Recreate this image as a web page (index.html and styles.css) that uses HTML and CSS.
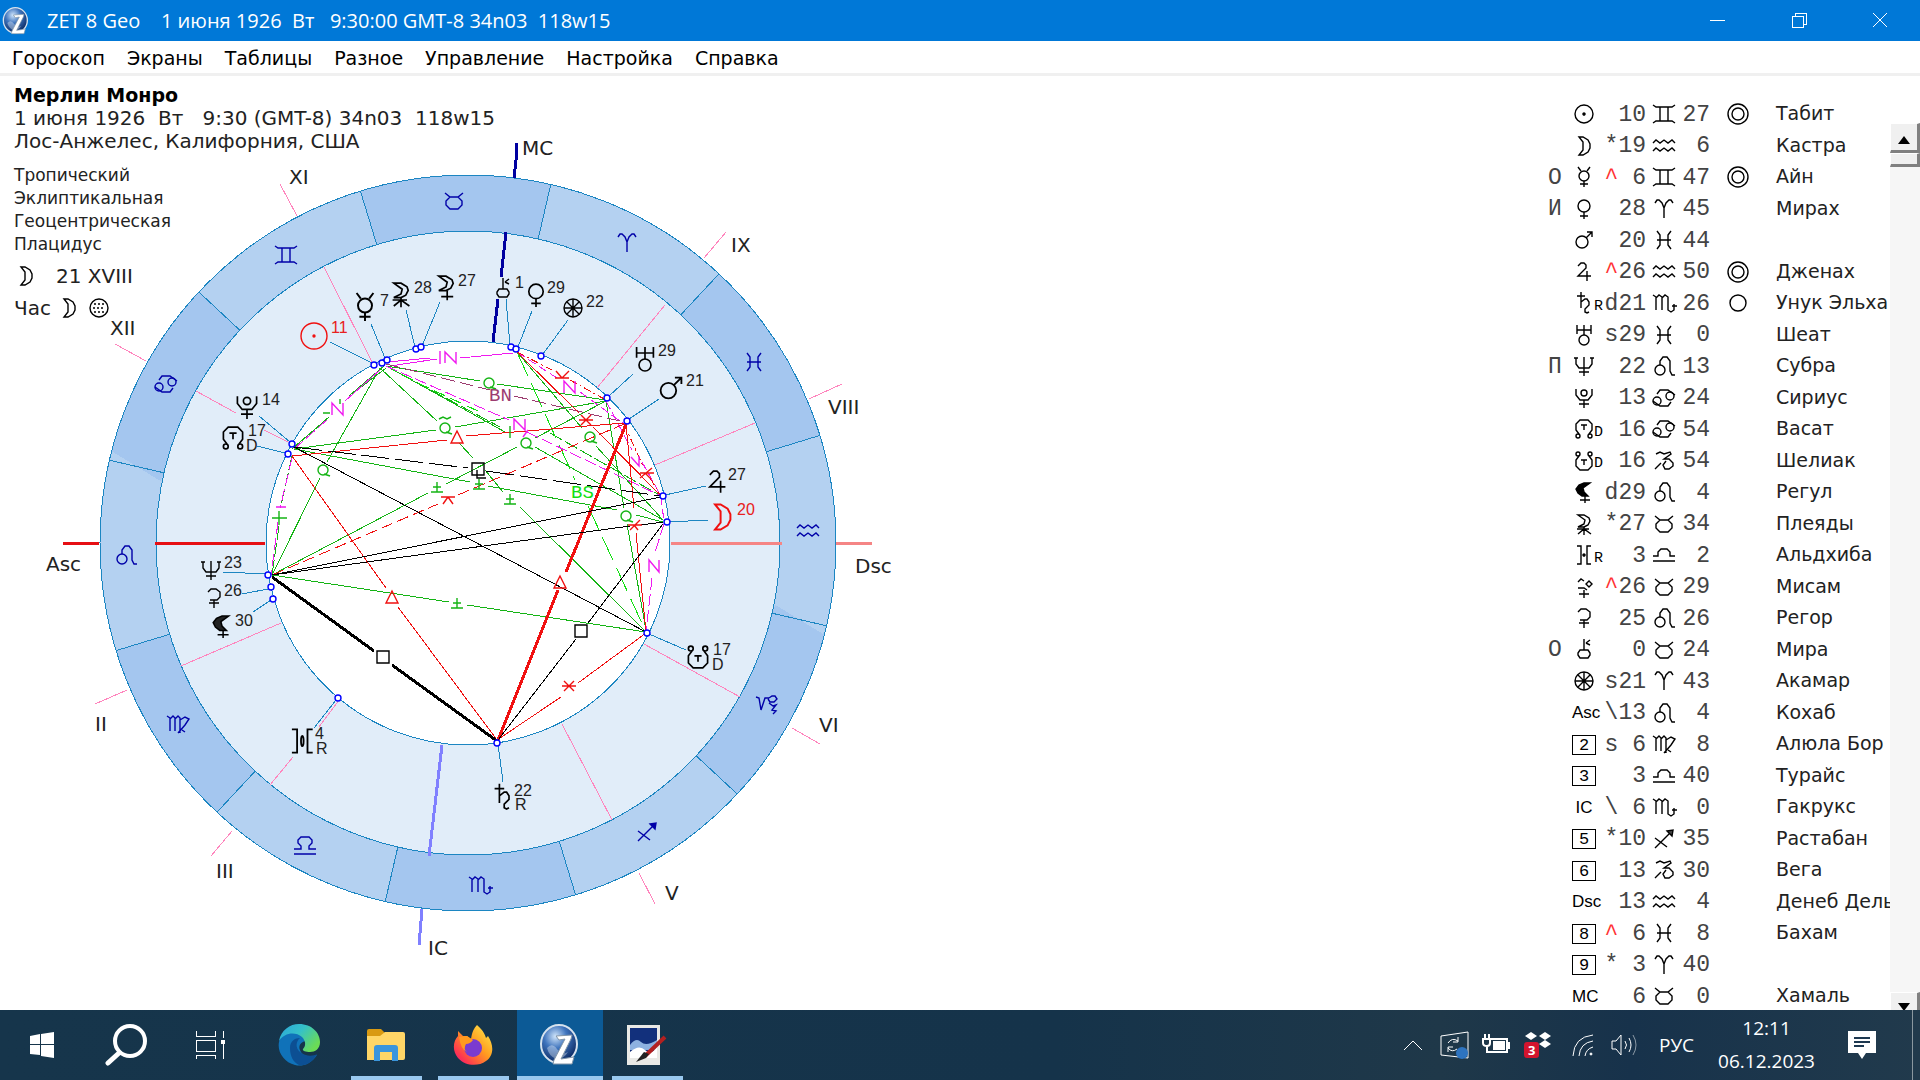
FILE: index.html
```html
<!DOCTYPE html>
<html lang="ru">
<head>
  <meta charset="UTF-8">
  <title>ZET 8 Geo</title>
  <link rel="stylesheet" href="styles.css">
</head>
<body>

  <!-- glyphs, all drawn around 0,0 -->
  <svg class="defs" width="0" height="0" aria-hidden="true">
    <defs>
      <radialGradient id="globe" cx="40%" cy="30%" r="70%"><stop offset="0" stop-color="#cfe4fa"/><stop offset=".45" stop-color="#3f74bd"/><stop offset="1" stop-color="#0c2a63"/></radialGradient>
      <linearGradient id="edgeTop" x1="0" y1="0" x2="1" y2=".6"><stop offset="0" stop-color="#2ba5dc"/><stop offset=".5" stop-color="#35c1c8"/><stop offset="1" stop-color="#6bdc55"/></linearGradient>
      <linearGradient id="fire" x1="1" y1="0" x2="0" y2="1"><stop offset="0" stop-color="#fff44f"/><stop offset=".45" stop-color="#ff9a1f"/><stop offset=".8" stop-color="#ff3650"/><stop offset="1" stop-color="#e0128b"/></linearGradient>

      <g id="sun"><circle r="9"/><circle class="solid" r="1"/></g>
      <g id="moon"><path d="M-5-9H-1L4-6L6-2V2L4 6L-1 9H-5L-1 4V-4Z"/></g>
      <g id="mer"><circle cy="-1" r="5"/><path d="M-6-10L-3-6M6-10L3-6M0 4V10M-4 7H4"/></g>
      <g id="ven"><circle cy="-3" r="6"/><path d="M0 3V10M-4 7H4"/></g>
      <g id="mar"><circle cx="-2" cy="2" r="6"/><path d="M2-2L8-8M3-8H8V-3"/></g>
      <g id="jup"><path d="M-6-6L-3-9H0L2-7V-4L-6 4H7M3-1V9"/></g>
      <g id="sat"><path d="M-3-11V5M-7-7H1M-3-1L1-4H3L5-1V2L1 6V9L3 10L5 9"/></g>
      <g id="ura"><path d="M-7-10V-1M7-10V-1M-7-5H7M0-10V0"/><circle cy="5" r="5"/></g>
      <g id="nep"><path d="M-8-8V-2L-5 2H5L8-2V-8M0-9V10M-5 6H5M-10-8H-6M6-8H10"/></g>
      <g id="plu"><circle cy="-5" r="3"/><path d="M-8-9V-3L-4 2H4L8-3V-9M0 2V10M-5 6H5"/></g>
      <g id="nn"><path d="M-5 5L-8 1V-5L-4-9H4L8-5V1L5 5M-3-4H3M0-4V1"/><circle cx="-6" cy="7" r="2"/><circle cx="6" cy="7" r="2"/></g>
      <g id="sn"><path d="M-5-5L-8-1V5L-4 9H4L8 5V-1L5-5M-3-1H3M0-1V4"/><circle cx="-6" cy="-7" r="2"/><circle cx="6" cy="-7" r="2"/></g>
      <g id="lil"><path class="solid" d="M6-9H0L-5-7L-8-3L-6 1L-2 4H4L0 0L-1-4Z"/><path d="M1 4V11M-4 8H6"/></g>
      <g id="whi"><path d="M-6-9H0L5-6L6-3L4 1L0 3H-6L0 0L1-4Z"/><path d="M0 3V11M-7 5H5M-6 10L0 5L7 10"/></g>
      <g id="whm"><path d="M-6-9H0L5-6L6-3L4 1L0 3H-6L0 0L1-4Z"/><path d="M1 3V11M-4 8H6"/></g>
      <g id="pro"><path d="M-7-9H-3V9H-7M9-9H5V9H9"/><ellipse cx="1" rx="1" ry="4"/></g>
      <g id="pro2"><path d="M-7-9H-3V9H-7M7-9H3V9H7"/><circle class="solid" r="1"/></g>
      <g id="dia"><path d="M-6-5L-3-8L0-6M-6 1H0L3 3M2-3L5-6L8-3L5 0ZM0 3V11M-5 7H5"/></g>
      <g id="cer"><path d="M-6-6L-3-9H2L6-6V-1L3 2H-4M0 2V10M-5 5H5"/></g>
      <g id="chi"><path d="M0-11V0M2-7L6-10M2-7L6-5M-4 0H4L6 3V5L4 8H-4L-6 5V3Z"/></g>
      <g id="for"><circle r="9"/><path d="M-9 0H9M0-9V9M-6-6L6 6M-6 6L6-6"/></g>

      <g id="ari"><path d="M-9-6L-7-9H-5L-2-6L0-1V9M9-6L7-9H5L2-6L0-1"/></g>
      <g id="tau"><path d="M-9-8L-4-4H4L9-8M-4-4L-8 0V4L-4 8H4L8 4V0L4-4"/></g>
      <g id="gem"><path d="M-11-9L-8-7H8L11-9M-11 9L-8 7H8L11 9M-4-7V7M4-7V7"/></g>
      <g id="can"><path d="M-7-4L-4-8H4L11-3M-11 3L-4 8H4L7 4"/><circle cx="6" cy="-2" r="4"/><circle cx="-7" cy="3" r="4"/></g>
      <g id="leo"><circle cx="-4" cy="4" r="5"/><path d="M-4-1L-4-5L-1-9H3L6-5V5L8 9H11"/></g>
      <g id="vir"><path d="M-11-8L-8-6V7M-8-5L-5-8L-3-6V7M-3-5L0-8L2-6V9M2-4L7-7L11-5L7 1L0 9M4 6L7 8"/></g>
      <g id="lib"><path d="M-11 4H-4V1L-7-2V-5L-4-8H4L7-5V-2L4 1V4H11M-11 9H11"/></g>
      <g id="lib2"><path d="M-11 1H-6V-3L-3-6H3L6-3V1H11M-11 6H11"/></g>
      <g id="sco"><path d="M-11-8L-8-6V7M-8-5L-5-8L-2-6V7M-2-5L1-8L4-6V7L7 9L10 7V1M8 3H13"/></g>
      <g id="sag"><path d="M-9 9L7-7M-9-1L3 8"/><path class="solid" d="M3-8L9-9L8-3Z"/></g>
      <g id="cap"><path d="M-11-8L-8-7L-6 5L-2-7H2M2-7L5-9H8L10-6L7-3H3L1-6M2-2L6 1L9 0L5 5L9 6L6 9"/></g>
      <g id="cap2"><path d="M-8-7L-4-9L0-7L6-9L7-7L0-2H5L9 2V5L5 8H1L-1 4L2 0M-9 8L-3 2"/></g>
      <g id="aqu"><path d="M-11-3L-8-6L-4-3L0-6L4-3L8-6L11-3M-11 5L-8 2L-4 5L0 2L4 5L8 2L11 5"/></g>
      <g id="pis"><path d="M-7-9L-4-5V5L-7 9M7-9L4-5V5L7 9M-7 0H7"/></g>

      <g id="ring2"><circle r="10"/><circle r="6"/></g>
      <g id="ring1"><circle r="8"/></g>

      <!-- aspect marks -->
      <g id="sq"><path d="M-6-6H6V6H-6Z"/></g>
      <g id="tri"><path d="M0-7L6 5H-6Z"/></g>
      <g id="sext"><path d="M-7 0H7M-5-5L5 5M-5 5L5-5"/></g>
      <g id="quin"><path d="M-6 5H6M0 5V-5M-4 0H4"/></g>
      <g id="inc"><path d="M-7-3H7M0-3L-5 4M0-3L5 4"/></g>
      <g id="q"><circle r="5"/><path d="M1 4L7 6"/></g>
      <g id="node"><circle r="3"/></g>
      <g id="zlogo"><ellipse cx="20" cy="20" rx="18" ry="19" fill="url(#globe)" stroke="#d6e2ee" stroke-width="2"/><path d="M8 24Q13 18 18 25T29 28Q24 36 17 35Q10 32 8 24Z" fill="#fff" opacity=".35"/><path d="M17 12L33 11L32 15L22 35L35 33L33 40H14L15 36L26 15L20 16Z" fill="#fff" stroke="#8195a8" stroke-width="1"/></g>
    </defs>
  </svg>

  <header class="titlebar">
    <svg class="app-icon" viewBox="0 0 42 42"><use href="#zlogo"/></svg>
    <h1>ZET 8 Geo    1 июня 1926  Вт   9:30:00 GMT-8 34n03  118w15</h1>
    <button class="win" aria-label="Свернуть"><svg width="16" height="16"><path d="M0 8H15"/></svg></button>
    <button class="win" aria-label="Восстановить"><svg width="16" height="16"><path d="M1 4H12V15H1ZM4 4V1H15V12H12"/></svg></button>
    <button class="win" aria-label="Закрыть"><svg class="smooth" width="16" height="16"><path d="M1 1L15 15M15 1L1 15"/></svg></button>
  </header>

  <nav class="menu">
    <button>Гороскоп</button>
    <button>Экраны</button>
    <button>Таблицы</button>
    <button>Разное</button>
    <button>Управление</button>
    <button>Настройка</button>
    <button>Справка</button>
  </nav>

  <main>
    <section class="chart">
      <div class="info">
        <h2>Мерлин Монро</h2>
        <p class="when">1 июня 1926  Вт   9:30 (GMT-8) 34n03  118w15</p>
        <p>Лос-Анжелес, Калифорния, США</p>
        <ul>
          <li>Тропический</li>
          <li>Эклиптикальная</li>
          <li>Геоцентрическая</li>
          <li>Плацидус</li>
        </ul>
        <p class="line"><svg class="g" viewBox="-12 -12 24 24"><use href="#moon"/></svg><span class="lunar">21 XVIII</span></p>
        <p class="line">Час <svg class="g" viewBox="-12 -12 24 24"><use href="#moon"/></svg><svg class="g" viewBox="-12 -12 24 24"><circle r="9"/><path stroke-dasharray="2 2" d="M-5-4H6M-6 0H6M-5 4H6"/></svg></p>
      </div>

      <svg class="wheel" viewBox="0 76 1000 934" preserveAspectRatio="xMinYMin meet">
        <!-- rings -->
        <g transform="translate(468 543)">
          <circle class="zodiac-light" r="340"/>
          <circle class="zodiac-dark" r="340" pathLength="360" transform="rotate(13)"/>
          <circle class="houses" r="312"/>
          <circle class="core" r="202"/>
          <circle class="rim" r="368"/>
          <g class="rim">
            <path id="cut" d="M-368 0H-312" transform="rotate(13)"/>
            <use href="#cut" transform="rotate(30)"/>
            <use href="#cut" transform="rotate(60)"/>
            <use href="#cut" transform="rotate(90)"/>
            <use href="#cut" transform="rotate(120)"/>
            <use href="#cut" transform="rotate(150)"/>
            <use href="#cut" transform="rotate(180)"/>
            <use href="#cut" transform="rotate(210)"/>
            <use href="#cut" transform="rotate(240)"/>
            <use href="#cut" transform="rotate(270)"/>
            <use href="#cut" transform="rotate(300)"/>
            <use href="#cut" transform="rotate(330)"/>
          </g>
        </g>

        <!-- house cusps -->
        <path class="cusp" d="M280 184L297 216M324 267L372 362M115 344L146 361M196 391L236 413M264 430L288 442M726 232L704 258M665 305L597 388M842 384L809 399M755 423L655 465M95 704L127 690M181 666L281 623M211 856L232 831M270 785L293 757M319 727L339 700M639 873L655 904M562 724L612 820M792 728L820 744M644 644L740 697"/>
        <path class="axis mc" d="M516 143V160L514 178M506 232L501 277M498 299L493 342"/>
        <path class="axis ic" d="M442 745L429 856M422 909L419 945"/>
        <path class="axis asc" d="M63 543H99M155 543H265"/>
        <path class="axis dsc" d="M671 543H782M836 543H872"/>

        <!-- aspects -->
        <g class="green">
          <path d="M386 366L480 381M497 384L606 400M380 368L437 421M459 443L473 458M485 470L503 492M520 507L646 632M380 368L327 462M320 478L272 575M384 366L349 396M329 417L292 449M386 368L352 394M326 420L294 447M294 449L436 430M455 427L606 401M294 449L470 482M488 486L617 510M636 515L663 522M272 575L428 493M446 484L517 447M535 438L606 401M272 575L449 602M467 605L646 632M517 352L582 428M596 446L663 520M606 401L624 508M627 524L646 630M535 447L663 520M390 368L505 432"/>
          <path stroke-dasharray="14 3" d="M292 456L281 505M279 526L272 575M386 366L500 427M550 433L661 496"/>
        </g>
        <g class="lime">
          <path stroke-dasharray="26 8" d="M517 352L575 480M588 506L646 632"/>
          <path stroke-dasharray="12 6" d="M386 366L420 384L480 412"/>
        </g>
        <g class="magenta">
          <path d="M388 362L430 358M390 366L437 359M460 358L513 353M345 401L380 370"/>
          <path stroke-dasharray="12 4" d="M386 366L509 420M527 432L661 496M294 449L328 419M292 458L280 508M278 522L271 575M664 524L655 552M652 578L646 632"/>
          <path stroke-dasharray="9 4" d="M517 352L560 380M580 392L624 424M606 401L632 450M642 462L661 496L664 522"/>
        </g>
        <g class="mauve"><path stroke-dasharray="14 5" d="M386 364L490 390M514 396L624 422"/></g>
        <g class="red">
          <path d="M292 456L447 440M466 436L624 423M292 456L386 588M398 607L497 740M517 352L579 413M593 427L661 496M497 740L561 697M578 683L646 633M626 424L634 508M636 533L646 632"/>
          <path stroke-dasharray="12 5" d="M272 575L438 504M458 495L624 424"/>
          <path stroke-dasharray="8 3 2 3" d="M517 352L552 370M570 380L606 400M624 424L643 466M650 478L661 496"/>
          <path class="bold" d="M626 424L566 572M558 590L498 740"/>
        </g>
        <g class="black">
          <path d="M294 447L646 632M272 575L661 497M272 575L630 526M641 525L663 522M663 524L588 623M576 639L498 740"/>
          <path stroke-dasharray="28 6" d="M294 447L468 468M486 471L661 496"/>
          <path class="bold" d="M272 577L374 651M392 665L497 741"/>
        </g>

        <g class="green marks">
          <use href="#q" x="489" y="383"/><use href="#q" x="445" y="428"/><path d="M439 419L443 417L447 419L451 417"/>
          <use href="#q" x="323" y="470"/><use href="#q" x="526" y="443"/><use href="#q" x="590" y="437"/><use href="#q" x="626" y="516"/>
          <use href="#quin" x="437" y="487"/><use href="#quin" x="479" y="484"/><use href="#quin" x="510" y="499"/><use href="#quin" x="457" y="603"/>
          <path d="M272 518H287M279 511V525M510 426V438M323 413H330M340 399V404"/>
        </g>
        <g class="red marks">
          <use href="#tri" x="457" y="438"/><use href="#tri" x="392" y="598"/><use href="#tri" x="560" y="583"/>
          <use href="#sext" x="569" y="686"/><use href="#sext" x="586" y="420"/>
          <use href="#inc" x="448" y="500"/><path d="M555 378H569M562 378L556 371M562 378L569 371"/>
          <path d="M640 473H654M640 478L652 468M645 473L651 479M628 525H642M630 530L640 520M634 525L638 530"/>
        </g>
        <g class="black marks"><use href="#sq" x="478" y="469"/><path d="M477 470V478H486"/><use href="#sq" x="383" y="657"/><use href="#sq" x="581" y="631"/></g>
        <g class="magenta marks">
          <path d="M440 351V364M445 363V352L456 363V352M332 415V403L343 415V403M514 430V419L525 430V419M528 430L523 437M564 393V381L575 393V381M649 572V560L659 572V560M631 457L639 466V456M276 507H286"/>
        </g>
        <text class="mauve-text" x="489" y="401">BN</text>
        <text class="lime-text" x="571" y="498">BS</text>

        <!-- leaders from the planets to the inner circle -->
        <path class="leader" d="M330 342L372 363M371 324L385 358M406 310L415 347M440 302L422 346M506 299L510 345M532 311L518 347M568 320L543 354M633 374L609 396M659 399L629 419M706 486L665 495M708 520L668 522M259 416L290 442M257 446L285 453M223 572L266 574M242 594L268 589M253 612L271 600M314 728L336 700M503 782L498 744M686 650L649 634"/>
        <g class="nodes">
          <use href="#node" x="374" y="365"/><use href="#node" x="382" y="363"/><use href="#node" x="387" y="360"/>
          <use href="#node" x="416" y="349"/><use href="#node" x="421" y="347"/><use href="#node" x="511" y="347"/>
          <use href="#node" x="516" y="349"/><use href="#node" x="541" y="356"/><use href="#node" x="607" y="398"/>
          <use href="#node" x="627" y="421"/><use href="#node" x="663" y="496"/><use href="#node" x="667" y="522"/>
          <use href="#node" x="647" y="633"/><use href="#node" x="497" y="743"/><use href="#node" x="338" y="698"/>
          <use href="#node" x="268" y="575"/><use href="#node" x="271" y="587"/><use href="#node" x="273" y="599"/>
          <use href="#node" x="292" y="444"/><use href="#node" x="288" y="454"/>
        </g>

        <!-- zodiac signs -->
        <g class="signs">
          <use href="#tau" x="454" y="201"/><use href="#gem" x="286" y="255"/><use href="#can" x="166" y="384"/>
          <use href="#leo" x="126" y="555"/><use href="#vir" x="178" y="724"/><use href="#lib" x="305" y="845"/>
          <use href="#sco" x="480" y="885"/><use href="#sag" x="647" y="832"/><use href="#cap" x="767" y="705"/>
          <use href="#aqu" x="808" y="531"/><use href="#pis" x="754" y="362"/><use href="#ari" x="627" y="243"/>
        </g>

        <!-- planets -->
        <g class="planets">
          <g class="hot"><circle cx="314" cy="336" r="13"/><circle class="solid" cx="314" cy="336" r="1"/><use href="#moon" transform="translate(722 517) scale(1.4)"/></g>
          <use href="#mer" transform="translate(365 307) scale(1.4)"/>
          <use href="#whi" transform="translate(401 294) scale(1.2)"/>
          <use href="#whm" transform="translate(446 287) scale(1.2)"/>
          <use href="#chi" x="503" y="289"/>
          <use href="#ven" transform="translate(536 295) scale(1.2)"/>
          <use href="#for" x="573" y="308"/>
          <use href="#ura" transform="translate(645 359) scale(1.2)"/>
          <use href="#mar" transform="translate(671 388) scale(1.3)"/>
          <use href="#jup" transform="translate(717 482) scale(1.2)"/>
          <use href="#plu" transform="translate(247 407) scale(1.2)"/>
          <use href="#nn" transform="translate(233 438) scale(1.2)"/>
          <use href="#nep" x="211" y="570"/>
          <use href="#cer" x="214" y="598"/>
          <use href="#lil" transform="translate(222 626) scale(1.1)"/>
          <use href="#pro" transform="translate(301 741) scale(1.3)"/>
          <use href="#sat" transform="translate(503 797) scale(1.2)"/>
          <use href="#sn" transform="translate(698 657) scale(1.2)"/>
        </g>
        <g class="deg">
          <text class="hot" x="331" y="333">11</text><text x="380" y="306">7</text><text x="414" y="293">28</text><text x="458" y="286">27</text>
          <text x="515" y="288">1</text><text x="547" y="293">29</text><text x="586" y="307">22</text><text x="658" y="356">29</text>
          <text x="686" y="386">21</text><text x="728" y="480">27</text><text class="hot" x="737" y="515">20</text><text x="262" y="405">14</text>
          <text x="248" y="436">17</text><text x="224" y="568">23</text><text x="224" y="596">26</text><text x="235" y="626">30</text>
          <text x="315" y="739">4</text><text x="514" y="796">22</text><text x="713" y="655">17</text>
          <text x="246" y="451">D</text><text x="316" y="754">R</text><text x="515" y="810">R</text><text x="712" y="670">D</text>
        </g>

        <g class="house">
          <text x="522" y="155">MC</text><text x="289" y="184">XI</text><text x="110" y="335">XII</text><text x="731" y="252">IX</text>
          <text x="828" y="414">VIII</text><text x="855" y="573">Dsc</text><text x="46" y="571">Asc</text><text x="95" y="731">II</text>
          <text x="216" y="878">III</text><text x="665" y="900">V</text><text x="819" y="732">VI</text><text x="428" y="955">IC</text>
        </g>
      </svg>
    </section>

    <aside>
      <table>
        <colgroup><col class="c-dig"><col class="c-body"><col class="c-deg"><col class="c-sign"><col class="c-min"><col class="c-ring"><col></colgroup>
        <tbody>
          <tr><td></td><td><svg class="g" viewBox="-12 -12 24 24"><use href="#sun"/></svg></td><td>10</td><td><svg class="g" viewBox="-12 -12 24 24"><use href="#gem"/></svg></td><td>27</td><td><svg class="g" viewBox="-12 -12 24 24"><use href="#ring2"/></svg></td><td>Табит</td></tr>
          <tr><td></td><td><svg class="g" viewBox="-12 -12 24 24"><use href="#moon"/></svg></td><td>*19</td><td><svg class="g" viewBox="-12 -12 24 24"><use href="#aqu"/></svg></td><td>6</td><td></td><td>Кастра</td></tr>
          <tr><td>О</td><td><svg class="g" viewBox="-12 -12 24 24"><use href="#mer"/></svg></td><td><i>^</i> 6</td><td><svg class="g" viewBox="-12 -12 24 24"><use href="#gem"/></svg></td><td>47</td><td><svg class="g" viewBox="-12 -12 24 24"><use href="#ring2"/></svg></td><td>Айн</td></tr>
          <tr><td>И</td><td><svg class="g" viewBox="-12 -12 24 24"><use href="#ven"/></svg></td><td>28</td><td><svg class="g" viewBox="-12 -12 24 24"><use href="#ari"/></svg></td><td>45</td><td></td><td>Мирах</td></tr>
          <tr><td></td><td><svg class="g" viewBox="-12 -12 24 24"><use href="#mar"/></svg></td><td>20</td><td><svg class="g" viewBox="-12 -12 24 24"><use href="#pis"/></svg></td><td>44</td><td></td><td></td></tr>
          <tr><td></td><td><svg class="g" viewBox="-12 -12 24 24"><use href="#jup"/></svg></td><td><i>^</i>26</td><td><svg class="g" viewBox="-12 -12 24 24"><use href="#aqu"/></svg></td><td>50</td><td><svg class="g" viewBox="-12 -12 24 24"><use href="#ring2"/></svg></td><td>Дженах</td></tr>
          <tr><td></td><td><svg class="g" viewBox="-12 -12 24 24"><use href="#sat"/></svg><small>R</small></td><td>d21</td><td><svg class="g" viewBox="-12 -12 24 24"><use href="#sco"/></svg></td><td>26</td><td><svg class="g" viewBox="-12 -12 24 24"><use href="#ring1"/></svg></td><td>Унук Эльха</td></tr>
          <tr><td></td><td><svg class="g" viewBox="-12 -12 24 24"><use href="#ura"/></svg></td><td>s29</td><td><svg class="g" viewBox="-12 -12 24 24"><use href="#pis"/></svg></td><td>0</td><td></td><td>Шеат</td></tr>
          <tr><td>П</td><td><svg class="g" viewBox="-12 -12 24 24"><use href="#nep"/></svg></td><td>22</td><td><svg class="g" viewBox="-12 -12 24 24"><use href="#leo"/></svg></td><td>13</td><td></td><td>Субра</td></tr>
          <tr><td></td><td><svg class="g" viewBox="-12 -12 24 24"><use href="#plu"/></svg></td><td>13</td><td><svg class="g" viewBox="-12 -12 24 24"><use href="#can"/></svg></td><td>24</td><td></td><td>Сириус</td></tr>
          <tr><td></td><td><svg class="g" viewBox="-12 -12 24 24"><use href="#nn"/></svg><small>D</small></td><td>16</td><td><svg class="g" viewBox="-12 -12 24 24"><use href="#can"/></svg></td><td>54</td><td></td><td>Васат</td></tr>
          <tr><td></td><td><svg class="g" viewBox="-12 -12 24 24"><use href="#sn"/></svg><small>D</small></td><td>16</td><td><svg class="g" viewBox="-12 -12 24 24"><use href="#cap2"/></svg></td><td>54</td><td></td><td>Шелиак</td></tr>
          <tr><td></td><td><svg class="g" viewBox="-12 -12 24 24"><use href="#lil"/></svg></td><td>d29</td><td><svg class="g" viewBox="-12 -12 24 24"><use href="#leo"/></svg></td><td>4</td><td></td><td>Регул</td></tr>
          <tr><td></td><td><svg class="g" viewBox="-12 -12 24 24"><use href="#whi"/></svg></td><td>*27</td><td><svg class="g" viewBox="-12 -12 24 24"><use href="#tau"/></svg></td><td>34</td><td></td><td>Плеяды</td></tr>
          <tr><td></td><td><svg class="g" viewBox="-12 -12 24 24"><use href="#pro2"/></svg><small>R</small></td><td>3</td><td><svg class="g" viewBox="-12 -12 24 24"><use href="#lib2"/></svg></td><td>2</td><td></td><td>Альдхиба</td></tr>
          <tr><td></td><td><svg class="g" viewBox="-12 -12 24 24"><use href="#dia"/></svg></td><td><i>^</i>26</td><td><svg class="g" viewBox="-12 -12 24 24"><use href="#tau"/></svg></td><td>29</td><td></td><td>Мисам</td></tr>
          <tr><td></td><td><svg class="g" viewBox="-12 -12 24 24"><use href="#cer"/></svg></td><td>25</td><td><svg class="g" viewBox="-12 -12 24 24"><use href="#leo"/></svg></td><td>26</td><td></td><td>Регор</td></tr>
          <tr><td>О</td><td><svg class="g" viewBox="-12 -12 24 24"><use href="#chi"/></svg></td><td>0</td><td><svg class="g" viewBox="-12 -12 24 24"><use href="#tau"/></svg></td><td>24</td><td></td><td>Мира</td></tr>
          <tr><td></td><td><svg class="g" viewBox="-12 -12 24 24"><use href="#for"/></svg></td><td>s21</td><td><svg class="g" viewBox="-12 -12 24 24"><use href="#ari"/></svg></td><td>43</td><td></td><td>Акамар</td></tr>
          <tr><td></td><td><span class="pt">Asc</span></td><td>\13</td><td><svg class="g" viewBox="-12 -12 24 24"><use href="#leo"/></svg></td><td>4</td><td></td><td>Кохаб</td></tr>
          <tr><td></td><td><span class="box">2</span></td><td>s 6</td><td><svg class="g" viewBox="-12 -12 24 24"><use href="#vir"/></svg></td><td>8</td><td></td><td>Алюла Бор</td></tr>
          <tr><td></td><td><span class="box">3</span></td><td>3</td><td><svg class="g" viewBox="-12 -12 24 24"><use href="#lib2"/></svg></td><td>40</td><td></td><td>Турайс</td></tr>
          <tr><td></td><td><span class="pt">IC</span></td><td>\ 6</td><td><svg class="g" viewBox="-12 -12 24 24"><use href="#sco"/></svg></td><td>0</td><td></td><td>Гакрукс</td></tr>
          <tr><td></td><td><span class="box">5</span></td><td>*10</td><td><svg class="g" viewBox="-12 -12 24 24"><use href="#sag"/></svg></td><td>35</td><td></td><td>Растабан</td></tr>
          <tr><td></td><td><span class="box">6</span></td><td>13</td><td><svg class="g" viewBox="-12 -12 24 24"><use href="#cap2"/></svg></td><td>30</td><td></td><td>Вега</td></tr>
          <tr><td></td><td><span class="pt">Dsc</span></td><td>13</td><td><svg class="g" viewBox="-12 -12 24 24"><use href="#aqu"/></svg></td><td>4</td><td></td><td>Денеб Дель</td></tr>
          <tr><td></td><td><span class="box">8</span></td><td><i>^</i> 6</td><td><svg class="g" viewBox="-12 -12 24 24"><use href="#pis"/></svg></td><td>8</td><td></td><td>Бахам</td></tr>
          <tr><td></td><td><span class="box">9</span></td><td>* 3</td><td><svg class="g" viewBox="-12 -12 24 24"><use href="#ari"/></svg></td><td>40</td><td></td><td></td></tr>
          <tr><td></td><td><span class="pt">MC</span></td><td>6</td><td><svg class="g" viewBox="-12 -12 24 24"><use href="#tau"/></svg></td><td>0</td><td></td><td>Хамаль</td></tr>
        </tbody>
      </table>
      <div class="scroll">
        <button aria-label="Вверх"><svg width="12" height="8"><path d="M6 0L12 8H0Z"/></svg></button>
        <div class="thumb"></div>
        <button class="down" aria-label="Вниз"><svg width="12" height="8"><path d="M0 0H12L6 8Z"/></svg></button>
      </div>
    </aside>
  </main>

  <footer class="taskbar">
    <button class="sys" aria-label="Пуск"><svg width="24" height="26"><path fill="#fff" d="M0 4L10 2V12H0ZM11 2L24 0V12H11ZM0 13H10V23L0 22ZM11 13H24V26L11 24Z"/></svg></button>
    <button class="sys" aria-label="Поиск"><svg width="42" height="42" fill="none" stroke="#fff"><circle cx="25" cy="17" r="15" stroke-width="4"/><path stroke-width="5" stroke-linecap="round" d="M14 29L3 39"/></svg></button>
    <button class="sys" aria-label="Представление задач"><svg width="30" height="28" fill="none" stroke="#fff" shape-rendering="crispEdges"><path d="M1 0V5H20V0M1 9H20V20H1ZM1 28V24H20V28M28 0V7M28 13V28"/><path fill="#fff" d="M26 9H29V12H26Z"/></svg></button>
    <button class="app first" aria-label="Edge"><svg width="42" height="42"><path fill="#1072b9" d="M1 18C3 8 12 4 20 6C28 9 30 14 29 17C23 17 20 22 22 26C24 32 31 34 39 31C33 40 24 43 17 41C6 38-1 28 1 18Z"/><path fill="#0c4f93" d="M12 24C12 17 17 14 22 14C18 17 17 24 22 28C28 33 36 32 39 30C34 40 26 42 21 41C15 38 12 32 12 24Z"/><path fill="url(#edgeTop)" d="M1 17C3 6 12 0 21 0C34 0 42 9 42 18C42 25 37 28 32 28C28 28 24 27 25 25C28 22 28 17 24 13C17 7 6 9 1 17Z"/></svg></button>
    <button class="app open" aria-label="Проводник"><svg width="38" height="32"><path fill="#d99a12" d="M0 2Q0 0 2 0H14L18 4V8H0Z"/><path fill="#ffd667" d="M0 7H13L18 3H36Q38 3 38 5V29Q38 31 36 31H0Z"/><path fill="#3a95dc" d="M7 32V19Q7 16 10 16H28Q31 16 31 19V32H25V23H13V32Z"/></svg></button>
    <button class="app open" aria-label="Firefox"><svg width="40" height="40"><path fill="url(#fire)" d="M24 0C31 6 32 10 33 13L35 11C41 20 41 31 33 36C25 42 12 41 5 33C-1 26 0 16 5 11L5 6L10 11H14L18 14C19 7 21 3 24 0Z"/><circle cx="20" cy="23" r="9" fill="#7a3bd0"/><path fill="#ff9a1f" d="M6 12L14 11L20 15Q17 19 13 19Q10 24 14 27Q8 25 6 12Z"/></svg></button>
    <button class="app open active" aria-label="ZET 8"><svg width="42" height="42"><use href="#zlogo"/></svg></button>
    <button class="app open" aria-label="Просмотр"><svg width="40" height="40"><path fill="#e9e9e6" d="M0 0H33V40H0Z"/><path fill="#12307c" d="M3 3H30V33H3Z"/><path fill="#8db1e0" d="M3 20Q9 12 14 17T30 15V25H3Z"/><path fill="#fff" d="M3 27Q12 19 18 25T30 22V33H3Z"/><path stroke="#b32020" stroke-width="4" d="M38 12L18 31"/><path fill="#222" d="M22 29L17 27L9 37L19 33Z"/></svg></button>

    <div class="tray">
      <button class="t-more" aria-label="Скрытые значки"><svg width="18" height="11"><path d="M0 10L9 1L18 10"/></svg></button>
      <svg class="t-sync" width="30" height="28"><path d="M1 5L28 1V27L1 24Z"/><path d="M8 12Q12 6 18 10M18 6V11H13M8 21V16H13M8 17Q12 22 17 18"/><circle cx="22" cy="22" r="6" fill="#2e74c0" stroke="none"/></svg>
      <svg class="t-bat" width="28" height="22"><path stroke-width="2" d="M9 5H25V18H7M27 8V15M1 5H8V9Q8 12 5 12Q1 12 1 9ZM3 5V0M7 5V0M5 12V18H9"/><path fill="#fff" stroke="none" d="M11 7H23V16H11Z"/></svg>
      <svg class="t-box" width="28" height="28"><path fill="#fff" stroke="none" d="M1 5L7 1L13 5L7 9ZM15 5L21 1L27 5L21 9ZM15 13L21 9L27 13L21 17Z"/><rect y="11" width="15" height="16" rx="3" fill="#d3142e" stroke="none"/><text x="4" y="24">3</text></svg>
      <svg class="t-wifi" width="22" height="22"><path d="M1 22Q2 3 21 1M7 22Q8 9 21 7M13 22Q14 15 21 13"/><circle cx="19" cy="20" r="1" fill="#fff"/></svg>
      <svg class="t-vol" width="28" height="22"><path d="M1 7H5L10 1V21L5 15H1ZM14 7Q17 11 14 15M18 4Q22 11 18 18"/><path opacity=".5" d="M22 1Q28 11 22 21"/></svg>
      <button class="t-lang">РУС</button>
      <button class="clock"><time>12:11</time><time>06.12.2023</time></button>
      <button class="t-note" aria-label="Уведомления"><svg width="28" height="28"><path fill="#fff" stroke="none" d="M0 0H28V22H18L14 28L10 22H0Z"/><path stroke="#1d3850" stroke-width="2" d="M6 7H22M6 11H22M6 15H16"/></svg></button>
      <span class="t-desk"></span>
    </div>
  </footer>

</body>
</html>
```
FILE: styles.css
```css
* {
  box-sizing: border-box;
}
body {
  margin: 0;
  height: 100vh;
  display: flex;
  flex-direction: column;
  overflow: hidden;
  background: #fff;
  color: #222;
  font-family: "DejaVu Sans", Verdana, sans-serif;
  font-size: 19px;
}
button {
  border: 0;
  padding: 0;
  background: none;
  color: inherit;
  font: inherit;
}
h1, h2, p, ul {
  margin: 0;
  padding: 0;
  font-weight: normal;
}
.defs {
  position: absolute;
}

/* title bar */
.titlebar {
  flex: none;
  display: flex;
  align-items: center;
  height: 41px;
  background: #0078d7;
  color: #fff;
}
.app-icon {
  width: 28px;
  height: 28px;
  margin: 0 17px 0 2px;
}
.titlebar h1 {
  flex: 1;
  font: 20px "Open Sans", "Segoe UI", sans-serif;
  white-space: pre;
}
.win {
  width: 81px;
  height: 41px;
}
.win svg {
  fill: none;
  stroke: #fff;
  shape-rendering: crispEdges;
}
.win .smooth {
  shape-rendering: auto;
}

/* menu */
.menu {
  flex: none;
  display: flex;
  gap: 22px;
  height: 35px;
  padding: 1px 12px 0;
  border-bottom: 3px solid #f0f0f0;
  color: #000;
}

main {
  flex: 1;
  display: flex;
  min-height: 0;
}
.chart {
  flex: 1;
  display: grid;
  min-width: 0;
  min-height: 0;
}
.info,
.wheel {
  grid-area: 1 / 1;
}
.info {
  padding: 8px 14px;
  line-height: 23px;
}
.info h2 {
  font-size: 19px;
  font-weight: bold;
  color: #000;
}
.info p {
  font-size: 20px;
}
.when {
  white-space: pre;
}
.info ul {
  padding: 11px 0 4px;
  list-style: none;
  font-size: 17px;
}
.info li {
  height: 23px;
}
.line {
  display: flex;
  align-items: center;
  gap: 6px;
  height: 32px;
}
.lunar {
  padding-left: 12px;
}

/* glyphs */
.g {
  width: 24px;
  height: 24px;
  overflow: visible;
  vertical-align: middle;
}
.g,
.wheel {
  fill: none;
  stroke: #000;
}
.g,
.signs,
.planets,
.marks,
.nodes {
  stroke-width: 1.4;
  shape-rendering: auto;
}
.solid {
  fill: currentColor;
}

/* wheel */
.wheel {
  width: 100%;
  height: 100%;
  shape-rendering: crispEdges;
}
.wheel text {
  stroke: none;
  fill: #222;
}
.zodiac-light {
  stroke: #b4d1f1;
  stroke-width: 56;
}
.zodiac-dark {
  stroke: #a4c6ef;
  stroke-width: 56;
  stroke-dasharray: 30 30;
}
.houses {
  fill: #e1edf9;
  stroke: #1c86c2;
}
.core {
  fill: #fff;
  stroke: #1c86c2;
}
.rim,
.leader {
  stroke: #1c86c2;
}
.cusp {
  stroke: #ff85bd;
}
.axis {
  stroke-width: 3;
}
.mc { stroke: #0000a0; }
.ic { stroke: #8080ff; }
.asc { stroke: #e60f14; }
.dsc { stroke: #f58585; }
.green { stroke: #14b414; }
.lime { stroke: #12e012; }
.magenta { stroke: #f01af0; }
.mauve { stroke: #9c3c70; }
.red { stroke: #f01010; }
.black { stroke: #000; }
.bold {
  stroke-width: 3;
}
.wheel .mauve-text,
.wheel .lime-text {
  fill: #9c3c70;
  font: 19px "Liberation Mono", monospace;
}
.wheel .lime-text {
  fill: #12e012;
}
.nodes {
  fill: #fff;
  stroke: #0000ff;
}
.signs {
  stroke: #0000a8;
  color: #0000a8;
}
.planets .hot {
  stroke: #f01010;
  color: #f01010;
}
.deg {
  font: 16px "Liberation Sans", Arial, sans-serif;
}
.wheel .deg .hot {
  fill: #e82020;
}
.house {
  font-size: 20px;
}

/* positions table */
aside {
  flex: none;
  display: flex;
  width: 380px;
  overflow: hidden;
}
table {
  flex: 1;
  width: 350px;
  height: 0;
  margin-top: 23px;
  table-layout: fixed;
  border-collapse: collapse;
}
tr {
  height: 31px;
}
tr:nth-child(even) {
  height: 32px;
}
td {
  padding: 0;
  color: #444;
  font-family: "Liberation Mono", "Courier New", monospace;
  font-size: 23px;
  line-height: 28px;
  text-align: right;
  white-space: pre;
}
td:nth-child(1),
td:nth-child(4),
td:nth-child(6) {
  text-align: center;
}
td:nth-child(2) {
  padding-left: 2px;
  color: #000;
  text-align: left;
}
td:last-child {
  padding: 0 0 3px 10px;
  overflow: hidden;
  color: #222;
  text-align: left;
  font-family: "DejaVu Sans", Verdana, sans-serif;
  font-size: 19px;
  line-height: 26px;
}
.c-dig, .c-body { width: 30px; }
.c-deg { width: 46px; }
.c-sign { width: 36px; }
.c-min { width: 28px; }
.c-ring { width: 56px; }
td i {
  color: #f33;
  font-style: normal;
}
td small {
  margin-left: -2px;
  font-size: 15px;
  line-height: 1;
}
.pt {
  display: block;
  width: 24px;
  font: 17px/28px "Liberation Sans", Arial, sans-serif;
  text-align: center;
}
.box {
  display: block;
  width: 24px;
  height: 20px;
  border: 1px solid #000;
  font-size: 17px;
  line-height: 19px;
  text-align: center;
}
.scroll {
  flex: none;
  display: flex;
  flex-direction: column;
  width: 30px;
  height: 100%;
  padding-top: 47px;
  background: linear-gradient(#fff 47px, #f6f6f6 47px);
}
.scroll button,
.thumb {
  flex: none;
  height: 30px;
  background: #f0f0f0;
  border: 1px solid #fff;
  border-right: 3px solid #808080;
  border-bottom: 3px solid #808080;
}
.scroll .thumb {
  height: 14px;
}
.scroll .down {
  height: 18px;
  margin-top: auto;
  border-bottom: 0;
}

/* taskbar */
.taskbar {
  flex: none;
  display: flex;
  height: 70px;
  background: linear-gradient(90deg, #16354b, #15334a 55%, #1f3849 75%, #17324b 85%, #213a4c);
  color: #fff;
}
.taskbar button {
  display: flex;
  align-items: center;
  justify-content: center;
}
.sys {
  width: 84px;
}
.app {
  width: 86px;
  margin-right: 1px;
}
.first {
  margin-left: 4px;
}
.open {
  background: linear-gradient(#99c8ef, #99c8ef) center bottom / 71px 4px no-repeat;
}
.taskbar .active {
  background: linear-gradient(#99c8ef, #99c8ef) center bottom / 100% 4px no-repeat #0c5a96;
}
.tray {
  display: flex;
  align-items: center;
  margin-left: auto;
  font-family: "Open Sans", "Segoe UI", sans-serif;
  font-size: 19px;
}
.tray svg {
  fill: none;
  stroke: #fff;
}
.tray text {
  fill: #fff;
  stroke: none;
  font: bold 13px "Open Sans", sans-serif;
}
.t-more { margin-right: 18px; }
.t-sync { margin-right: 12px; }
.t-bat { margin-right: 14px; }
.t-box, .t-vol { margin-right: 20px; }
.t-wifi { margin-right: 17px; }
.t-lang { margin-right: 24px; }
.taskbar .clock {
  flex-direction: column;
  margin-right: 33px;
  line-height: 33px;
}
.t-note { margin-right: 36px; }
.t-desk {
  width: 8px;
  height: 70px;
  border-left: 1px solid #8a979f;
}
```
